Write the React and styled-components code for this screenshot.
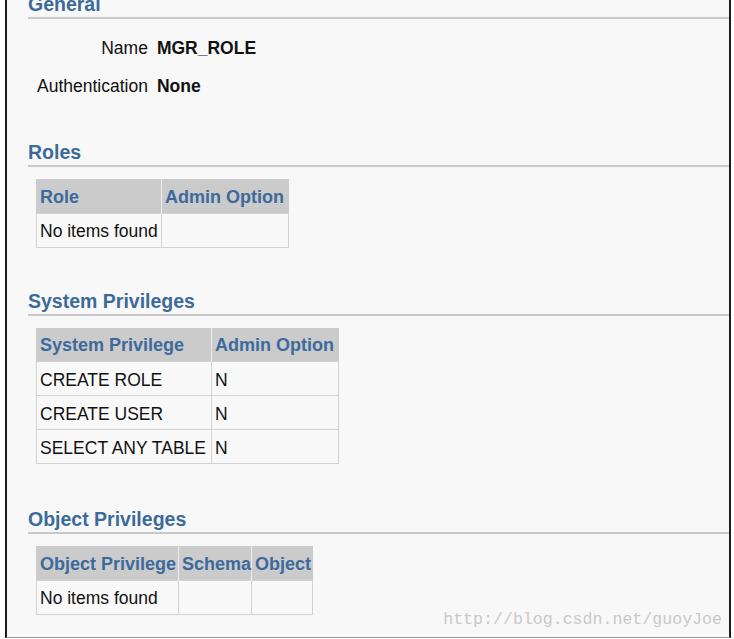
import React from "react";
import styled, { createGlobalStyle } from "styled-components";

const Global = createGlobalStyle`
  html, body { margin: 0; padding: 0; background: #ffffff; }
  body { font-family: "Liberation Sans", Arial, sans-serif; }
`;

const Frame = styled.div`
  position: relative;
  box-sizing: border-box;
  margin-left: 5px;
  width: 726px;
  height: 638px;
  overflow: hidden;
  background: #f8f8f8;
  border-left: 2px solid #1c1c1c;
  border-right: 2px solid #1c1c1c;
  border-bottom: 1px solid #9a9a9a;
  display: flex;
  flex-direction: column;
`;

const Section = styled.section`
  display: flex;
  flex-direction: column;
  align-items: flex-start;
  margin-top: ${(p) => p.$top}px;
`;

const Header = styled.h2`
  align-self: stretch;
  margin: 0 0 0 21px;
  font-size: 19.5px;
  font-weight: bold;
  line-height: 22px;
  color: #3c6a99;
  padding-bottom: 2px;
  border-bottom: 2px solid #c9c9c9;
`;

const Props = styled.div`
  display: grid;
  grid-template-columns: max-content max-content;
  column-gap: 9px;
  row-gap: 16px;
  margin: 18px 0 0 30px;
  font-size: 17.5px;
  line-height: 22px;
  color: #111;
`;

const Label = styled.span`
  justify-self: end;
`;

const Value = styled.span`
  font-weight: bold;
`;

const Table = styled.table`
  margin: 12px 0 0 29px;
  border-collapse: collapse;
  table-layout: fixed;
  font-size: 17.5px;
  color: #111;
`;

const Th = styled.th`
  box-sizing: border-box;
  width: ${(p) => p.$w}px;
  height: 34px;
  padding: 3px 0 0 3px;
  background: #cbcbcb;
  color: #3c6a9c;
  font-size: 18px;
  font-weight: bold;
  text-align: left;
  white-space: nowrap;
  border-left: 1px solid ${(p) => (p.$first ? "#cbcbcb" : "#ececec")};
`;

const Td = styled.td`
  box-sizing: border-box;
  height: 34px;
  padding: 3px 0 0 3px;
  white-space: nowrap;
  background: #f9f9f9;
  border: 1px solid #d2d2d2;
`;

const Watermark = styled.div`
  position: absolute;
  right: 7px;
  bottom: 7px;
  font-family: "Liberation Mono", "Courier New", monospace;
  font-size: 16.6px;
  line-height: 20px;
  color: #c9c9c9;
`;

function DataTable({ cols, rows }) {
  return (
    <Table>
      <thead>
        <tr>
          {cols.map((c, i) => (
            <Th key={c.name} $w={c.w} $first={i === 0}>
              {c.name}
            </Th>
          ))}
        </tr>
      </thead>
      <tbody>
        {rows.map((r, ri) => (
          <tr key={ri}>
            {cols.map((c, ci) => (
              <Td key={ci}>{r[ci] || ""}</Td>
            ))}
          </tr>
        ))}
      </tbody>
    </Table>
  );
}

export default function App() {
  return (
    <>
      <Global />
      <Frame>
        <Section $top={-7}>
          <Header>General</Header>
          <Props>
            <Label>Name</Label>
            <Value>MGR_ROLE</Value>
            <Label>Authentication</Label>
            <Value>None</Value>
          </Props>
        </Section>
        <Section $top={44}>
          <Header>Roles</Header>
          <DataTable
            cols={[
              { name: "Role", w: 125 },
              { name: "Admin Option", w: 127 },
            ]}
            rows={[["No items found", ""]]}
          />
        </Section>
        <Section $top={42}>
          <Header>System Privileges</Header>
          <DataTable
            cols={[
              { name: "System Privilege", w: 175 },
              { name: "Admin Option", w: 127 },
            ]}
            rows={[
              ["CREATE ROLE", "N"],
              ["CREATE USER", "N"],
              ["SELECT ANY TABLE", "N"],
            ]}
          />
        </Section>
        <Section $top={44}>
          <Header>Object Privileges</Header>
          <DataTable
            cols={[
              { name: "Object Privilege", w: 142 },
              { name: "Schema", w: 73 },
              { name: "Object", w: 61 },
            ]}
            rows={[["No items found", "", ""]]}
          />
        </Section>
        <Watermark>http://blog.csdn.net/guoyJoe</Watermark>
      </Frame>
    </>
  );
}
